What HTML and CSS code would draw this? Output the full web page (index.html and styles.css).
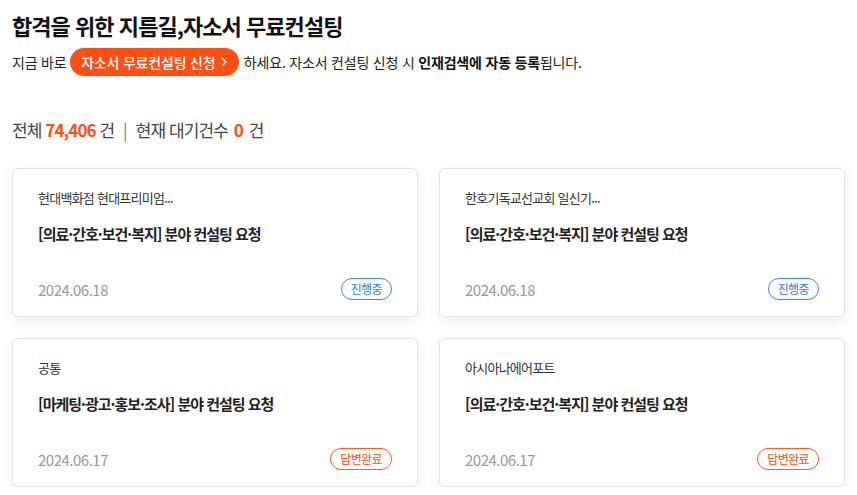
FILE: index.html
```html
<!DOCTYPE html>
<html lang="ko">
<head>
<meta charset="utf-8">
<link rel="stylesheet" href="styles.css">
</head>
<body>
<div class="page">
  <h1 class="title">합격을 위한 지름길,자소서 무료컨설팅</h1>
  <p class="lead">지금 바로 <a class="pill">자소서 무료컨설팅 신청 <svg class="chev" width="6" height="10" viewBox="0 0 6 10"><path d="M1 1l4 4-4 4" fill="none" stroke="#fff" stroke-width="1.3"/></svg></a> 하세요. 자소서 컨설팅 신청 시 <b>인재검색에 자동 등록</b>됩니다.</p>
  <p class="stats">전체 <em>74,406</em> 건 <span class="sep">|</span> 현재 대기건수 <em class="zero">0</em> 건</p>
  <div class="grid">
    <div class="card">
      <div class="company">현대백화점 현대프리미엄...</div>
      <div class="subject">[의료·간호·보건·복지] 분야 컨설팅 요청</div>
      <div class="foot"><span class="date">2024.06.18</span><span class="badge blue">진행중</span></div>
    </div>
    <div class="card">
      <div class="company">한호기독교선교회 일신기...</div>
      <div class="subject">[의료·간호·보건·복지] 분야 컨설팅 요청</div>
      <div class="foot"><span class="date">2024.06.18</span><span class="badge blue">진행중</span></div>
    </div>
    <div class="card">
      <div class="company">공통</div>
      <div class="subject">[마케팅·광고·홍보·조사] 분야 컨설팅 요청</div>
      <div class="foot"><span class="date">2024.06.17</span><span class="badge orange">답변완료</span></div>
    </div>
    <div class="card">
      <div class="company">아시아나에어포트</div>
      <div class="subject">[의료·간호·보건·복지] 분야 컨설팅 요청</div>
      <div class="foot"><span class="date">2024.06.17</span><span class="badge orange">답변완료</span></div>
    </div>
  </div>
</div>
</body>
</html>
```
FILE: styles.css
```css
* { box-sizing: border-box; }
html, body { margin: 0; padding: 0; background: #fff; }
body {
  font-family: "Noto Sans CJK KR", "Noto Sans", sans-serif;
  color: #222;
}
.page { padding: 10px 12px 0; }
.title {
  margin: 0;
  font-size: 22px;
  line-height: 30px;
  font-weight: 700;
  color: #111;
  letter-spacing: -0.95px;
}
.lead {
  margin: 8px 0 0;
  font-size: 14px;
  line-height: 28px;
  color: #222;
  letter-spacing: -0.2px;
  display: flex;
  align-items: center;
  white-space: pre;
}
.lead b { font-weight: 700; color: #111; }
.pill {
  display: inline-flex;
  align-items: center;
  height: 28px;
  padding: 0 12px 0 11px;
  margin: 0 1px 0 0;
  border-radius: 14px;
  background: #ff4f14;
  color: #fff;
  font-weight: 500;
  font-size: 14px;
  letter-spacing: -0.2px;
}
.chev { margin-left: 2px; }
.stats {
  margin: 42px 0 0;
  font-size: 17px;
  line-height: 24px;
  color: #444;
  letter-spacing: -0.9px;
}
.stats em { font-style: normal; color: #ff4f14; font-weight: 700; }
.stats em.zero { margin: 0 2px; }
.sep { color: #777; margin: 0 5px; }
.grid {
  margin-top: 26px;
  display: grid;
  grid-template-columns: 406px 406px;
  column-gap: 21px;
  row-gap: 21px;
}
.card {
  height: 149px;
  border: 1px solid #e3e3e3;
  border-radius: 6px;
  background: #fff;
  box-shadow: 0 4px 14px rgba(0, 0, 0, 0.07);
  padding: 19px 25px 16px 25px;
  display: flex;
  flex-direction: column;
}
.company {
  font-size: 13px;
  line-height: 20px;
  color: #333;
  letter-spacing: -0.75px;
}
.subject {
  margin-top: 16px;
  font-size: 15px;
  line-height: 20px;
  font-weight: 700;
  color: #222;
  letter-spacing: -1px;
}
.foot {
  margin-top: auto;
  display: flex;
  justify-content: space-between;
  align-items: center;
  height: 22px;
}
.date {
  font-size: 15px;
  color: #999;
  letter-spacing: -0.5px;
}
.badge {
  height: 22px;
  border-radius: 11px;
  border: 1px solid;
  padding: 0 9px;
  font-size: 12px;
  line-height: 20px;
  letter-spacing: -0.6px;
}
.badge.blue { border-color: #3f86f0; color: #3478e8; }
.badge.orange { border-color: #ff5a1f; color: #ff4f14; }
```
